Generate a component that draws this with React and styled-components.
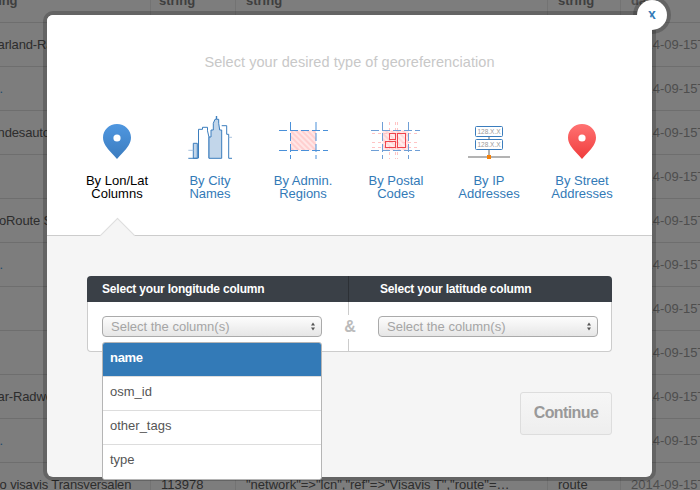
import React from 'react';
import styled, { createGlobalStyle } from 'styled-components';

const Global = createGlobalStyle`
  html, body { margin: 0; padding: 0; background: #fff; }
  body { font-family: "Liberation Sans", Arial, sans-serif; width: 700px; height: 490px; overflow: hidden; position: relative; }
  * { box-sizing: border-box; }
`;

const Page = styled.div`position: relative; width: 700px; height: 490px; overflow: hidden;`;
const Table = styled.div`margin: -21px 0 0 -28px; width: 760px;`;
const Row = styled.div`
  display: grid;
  grid-template-columns: 178px 85px 312px 73px 112px;
  height: 44px;
  border-bottom: 1px solid #e0e0e0;
  align-items: stretch;
  font-size: 13px;
  color: ${p => (p.$head ? '#808080' : '#5c5c5c')};
  font-weight: ${p => (p.$head ? 700 : 400)};
`;
const Cell = styled.div`
  padding: 0 ${p => (p.$head ? 8 : 10)}px;
  display: flex;
  align-items: center;
  white-space: nowrap;
  overflow: hidden;
  border-left: ${p => (p.$first ? 'none' : '1px solid #eaeaea')};
  color: ${p => (p.$link ? '#4a9ae0' : p.$muted ? '#a0a0a0' : 'inherit')};
  letter-spacing: ${p => (p.$first ? '-0.15px' : 0)};
`;
const Backdrop = styled.div`position: absolute; inset: 0; background: rgba(0, 0, 0, 0.51);`;

const Modal = styled.div`
  position: absolute;
  left: 47px;
  top: 15px;
  width: 605px;
  height: 462px;
  background: #f5f5f5;
  border-radius: 6px;
  box-shadow: 0 0 0 4px rgba(0, 0, 0, 0.2);
  display: flex;
  flex-direction: column;
`;
const Close = styled.div`
  position: absolute;
  right: -15px;
  top: -15px;
  width: 30px;
  height: 30px;
  border-radius: 50%;
  background: #fff;
  box-shadow: 0 0 0 4px rgba(0, 0, 0, 0.2);
  display: flex;
  align-items: center;
  justify-content: center;
  color: #337ab7;
  font-size: 14px;
  font-weight: 700;
  padding-bottom: 2px;
`;
const Head = styled.div`
  position: relative;
  height: 221px;
  background: #fff;
  border-bottom: 1px solid #ccc;
  border-radius: 6px 6px 0 0;
  padding: 39px 23.5px 0;
`;
const Title = styled.div`
  text-align: center;
  font-size: 14.5px;
  letter-spacing: 0.05px;
  line-height: 16px;
  color: #c8c8c8;
  margin-bottom: 46px;
`;
const Tabs = styled.div`display: grid; grid-template-columns: repeat(6, 93px);`;
const Tab = styled.div`
  display: flex;
  flex-direction: column;
  align-items: center;
  text-align: center;
  font-size: 13px;
  line-height: 13px;
  color: ${p => (p.$active ? '#000' : '#337ab7')};
`;
const IconBox = styled.div`
  height: 46px;
  width: 93px;
  margin-bottom: 12px;
  display: flex;
  justify-content: center;
  svg { display: block; }
`;
const Arrow = styled.div`
  position: absolute;
  left: 57.5px;
  bottom: -13px;
  width: 25px;
  height: 25px;
  background: #f5f5f5;
  border-top: 1px solid #ddd;
  border-left: 1px solid #ddd;
  transform: rotate(45deg);
`;
const Body = styled.div`flex: 1; padding: 40px 40px 0;`;
const Panel = styled.div`position: relative;`;
const PanelHead = styled.div`
  display: grid;
  grid-template-columns: 261px 1fr;
  height: 26px;
  background: #3a4047;
  border-radius: 4px 4px 0 0;
  color: #fff;
  font-size: 12px;
  font-weight: 700;
  letter-spacing: -0.2px;
`;
const HeadCell = styled.div`
  display: flex;
  align-items: center;
  padding-left: ${p => p.$pad}px;
  border-left: ${p => (p.$divided ? '1px solid #2c3035' : 'none')};
`;
const PanelBody = styled.div`
  position: relative;
  display: grid;
  grid-template-columns: 261px 1fr;
  height: 50px;
  background: #fff;
  border: 1px solid #ccc;
  border-top: none;
  border-radius: 0 0 4px 4px;
`;
const SelectCell = styled.div`
  padding: ${p => (p.$right ? '14px 13px 0 29px' : '14px 0 0 14px')};
  margin-left: ${p => (p.$right ? '-1px' : 0)};
  border-left: ${p => (p.$right ? '1px solid #ccc' : 'none')};
  position: relative;
`;
const Select = styled.div`
  display: flex;
  align-items: center;
  justify-content: space-between;
  width: 220px;
  height: 21px;
  padding: 0 5px 0 8px;
  background: linear-gradient(#fdfdfd, #e6e6e6);
  border: 1px solid #aaa;
  border-radius: 4px;
  color: #a5a5a5;
  font-size: 13px;
`;
const Amp = styled.div`
  position: absolute;
  left: 251px;
  top: 13px;
  width: 22px;
  height: 24px;
  background: #fff;
  color: #bbb;
  font-size: 16px;
  font-weight: 700;
  line-height: 24px;
  text-align: center;
`;
const List = styled.div`
  position: absolute;
  left: 14px;
  top: 40px;
  width: 220px;
  background: #fff;
  border: 1px solid #b5b5b5;
  border-radius: 3px;
  overflow: hidden;
  z-index: 2;
`;
const Item = styled.div`
  height: 34px;
  padding: 0 7px 5px;
  display: flex;
  align-items: center;
  font-size: 13px;
  background: ${p => (p.$active ? '#337ab7' : '#fff')};
  color: ${p => (p.$active ? '#fff' : '#555')};
  font-weight: ${p => (p.$active ? 700 : 400)};
  letter-spacing: ${p => (p.$active ? '-0.3px' : 0)};
  border-bottom: 1px solid ${p => (p.$last ? 'transparent' : '#ddd')};
`;
const Footer = styled.div`display: flex; justify-content: flex-end; margin-top: 40px;`;
const Continue = styled.div`
  width: 92px;
  height: 43px;
  padding-bottom: 2px;
  border: 1px solid #ddd;
  border-radius: 3px;
  background: linear-gradient(#f6f6f6, #eeeeee);
  color: #999;
  font-size: 16px;
  font-weight: 700;
  letter-spacing: -0.6px;
  display: flex;
  align-items: center;
  justify-content: center;
`;

const Pin = ({ id, a, b }) => (
  <svg width="30" height="46" viewBox="102 116 30 46">
    <defs>
      <linearGradient id={id} x1="0" y1="0" x2="0" y2="1">
        <stop offset="0" stopColor={a} />
        <stop offset="1" stopColor={b} />
      </linearGradient>
    </defs>
    <path
      d="M117 124c-7.8 0-14 6.1-14 13.6 0 3 1 5.6 2.6 8.2 3 4.6 7.8 8.8 11.4 13.2 3.6-4.4 8.4-8.6 11.4-13.2 1.6-2.6 2.6-5.2 2.6-8.2 0-7.5-6.2-13.6-14-13.6z"
      fill={`url(#${id})`}
    />
    <circle cx="117" cy="138" r="3.6" fill="#fff" />
  </svg>
);

const CityIcon = () => (
  <svg width="48" height="46" viewBox="186 116 48 46">
    <path d="M193.3 158.3v-15h4v15z" fill="#c2d6ea" stroke="#3b7dbd" />
    <path d="M188.3 150.3h5" stroke="#a9c4df" fill="none" />
    <path d="M188.3 158.3h9.5" stroke="#3b7dbd" fill="none" />
    <path d="M198.5 158.3v-29h4v-2h5v3.5l1.5 6.5v21" fill="none" stroke="#3b7dbd" />
    <path
      d="M209 158.3V137h2v-7h2.3v-6.7l1.7-4h1.3V116h.4v3.3h2v4l1 6.7h2v28.3z"
      fill="#c2d6ea"
      stroke="#3b7dbd"
    />
    <path d="M221.7 125.7h5v8.6h2v24h3.3" fill="none" stroke="#3b7dbd" />
    <path d="M228.7 137.3h3.3" stroke="#a9c4df" fill="none" />
  </svg>
);

const AdminIcon = () => (
  <svg width="50" height="46" viewBox="278 116 50 46">
    <defs>
      <pattern id="hatchA" width="4" height="4" patternUnits="userSpaceOnUse" patternTransform="rotate(-45)">
        <rect width="4" height="4" fill="#ffe6e6" />
        <rect width="2" height="4" fill="#ffcfcf" />
      </pattern>
    </defs>
    <rect x="290.7" y="130.3" width="25.3" height="20" fill="url(#hatchA)" />
    <g stroke="#4a90d9" strokeDasharray="8 3" fill="none">
      <path d="M279 130.5h49M279 150.5h49" />
      <path d="M290.5 122v37M316 122v37" />
    </g>
  </svg>
);

const PostalIcon = () => (
  <svg width="50" height="46" viewBox="372 116 50 46">
    <defs>
      <pattern id="hatchB" width="4" height="4" patternUnits="userSpaceOnUse" patternTransform="rotate(-45)">
        <rect width="4" height="4" fill="#ffeaea" />
        <rect width="2" height="4" fill="#ffd4d4" />
      </pattern>
    </defs>
    <rect x="383.5" y="130.5" width="26" height="20" fill="url(#hatchB)" />
    <g stroke="#ffc4c4" strokeDasharray="3 3" fill="none">
      <path d="M373 133.5h48M373 142.5h48M373 147.5h48" />
      <path d="M390.5 122v37M396.5 122v37M398.5 122v37" />
    </g>
    <g stroke="#6f9fd6" strokeDasharray="8 3" fill="none">
      <path d="M372 130.5h49M372 150.5h49" />
      <path d="M383.5 122v37M409.5 122v37" />
    </g>
    <g stroke="#f0444c" fill="#fff" fillOpacity="0.15">
      <rect x="398.5" y="133.5" width="8" height="14" />
      <rect x="390.5" y="133.5" width="6" height="6" />
      <rect x="386.5" y="141.5" width="10" height="6" />
    </g>
  </svg>
);

const IpText = styled.text`
  font-family: "Liberation Sans", sans-serif;
  font-size: 6.5px;
  fill: #999;
`;

const IpIcon = () => (
  <svg width="44" height="46" viewBox="467 116 44 46">
    <path d="M489 136v4M489 149v7" stroke="#999" strokeWidth="1.5" />
    <rect x="475.5" y="126.5" width="27" height="10" rx="1" fill="#fff" stroke="#3b7dbd" />
    <rect x="475.5" y="139.5" width="27" height="10" rx="1" fill="#fff" stroke="#3b7dbd" />
    <IpText x="489" y="134" textAnchor="middle">128.X.X</IpText>
    <IpText x="489" y="147" textAnchor="middle">128.X.X</IpText>
    <path d="M468 157h42" stroke="#b3b3b3" strokeWidth="2" />
    <rect x="487" y="155" width="4" height="4" fill="#f5820a" />
  </svg>
);

const Chevrons = () => (
  <svg width="6" height="9" viewBox="0 0 6 9">
    <path d="M3 0.5L5 3.5H1zM3 8.5L1 5.5H5z" fill="#555" />
  </svg>
);

const rows = [
  ['Saarland-Radweg'],
  ['n/a.', true],
  ['Bundesautobahn'],
  [''],
  ['GeoRoute Saar'],
  ['n/a.', true],
  [''],
  [''],
  ['Saar-Radweg'],
  ['n/a.', true],
];

const tabs = [
  { icon: <Pin id="pinBlue" a="#4f97e0" b="#3b7cbf" />, label: ['By Lon/Lat', 'Columns'], active: true },
  { icon: <CityIcon />, label: ['By City', 'Names'] },
  { icon: <AdminIcon />, label: ['By Admin.', 'Regions'] },
  { icon: <PostalIcon />, label: ['By Postal', 'Codes'] },
  { icon: <IpIcon />, label: ['By IP', 'Addresses'] },
  { icon: <Pin id="pinRed" a="#ff7272" b="#f03c3c" />, label: ['By Street', 'Addresses'] },
];

export default function App() {
  return (
    <Page>
      <Global />
      <Table>
        <Row $head>
          <Cell $first>string</Cell>
          <Cell $head>string</Cell>
          <Cell>string</Cell>
          <Cell>string</Cell>
          <Cell $muted>date</Cell>
        </Row>
        {rows.map(([name, link], i) => (
          <Row key={i}>
            <Cell $first $link={link}>{name}</Cell>
            <Cell />
            <Cell />
            <Cell />
            <Cell $muted>2014-09-15T</Cell>
          </Row>
        ))}
        <Row>
          <Cell $first>Velo visavis Transversalen</Cell>
          <Cell>113978</Cell>
          <Cell>"network"=&gt;"lcn","ref"=&gt;"Visavis T","route"=…</Cell>
          <Cell>route</Cell>
          <Cell $muted>2014-09-15T</Cell>
        </Row>
      </Table>
      <Backdrop />
      <Modal>
        <Close>x</Close>
        <Head>
          <Title>Select your desired type of georeferenciation</Title>
          <Tabs>
            {tabs.map((t, i) => (
              <Tab key={i} $active={t.active}>
                <IconBox>{t.icon}</IconBox>
                {t.label[0]}
                <br />
                {t.label[1]}
              </Tab>
            ))}
          </Tabs>
          <Arrow />
        </Head>
        <Body>
          <Panel>
            <PanelHead>
              <HeadCell $pad={15}>Select your longitude column</HeadCell>
              <HeadCell $pad={31} $divided>Select your latitude column</HeadCell>
            </PanelHead>
            <PanelBody>
              <SelectCell>
                <Select>Select the column(s)<Chevrons /></Select>
                <List>
                  <Item $active>name</Item>
                  <Item>osm_id</Item>
                  <Item>other_tags</Item>
                  <Item $last>type</Item>
                </List>
              </SelectCell>
              <SelectCell $right>
                <Select>Select the column(s)<Chevrons /></Select>
              </SelectCell>
              <Amp>&amp;</Amp>
            </PanelBody>
          </Panel>
          <Footer>
            <Continue>Continue</Continue>
          </Footer>
        </Body>
      </Modal>
    </Page>
  );
}
